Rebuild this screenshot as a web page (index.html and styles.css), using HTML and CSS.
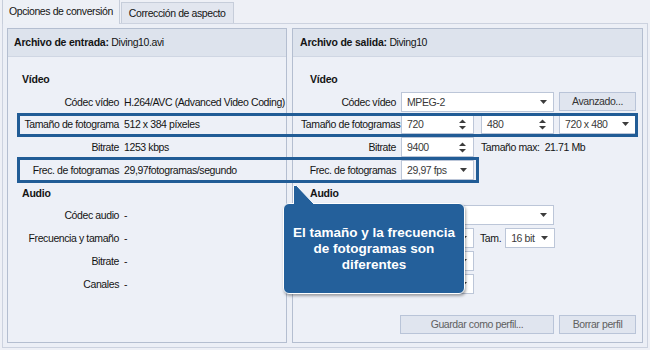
FILE: index.html
```html
<!DOCTYPE html>
<html lang="es">
<head>
    <meta charset="UTF-8">
    <title>Opciones de conversión</title>
    <link rel="stylesheet" href="styles.css">
</head>
<body>
<div class="window">
    <div class="tabs">
        <div class="tab active">Opciones de conversión</div>
        <div class="tab">Corrección de aspecto</div>
    </div>

    <div class="page">
        <!-- input file -->
        <section class="panel panel-in">
            <header class="panel-head"><b>Archivo de entrada:</b> Diving10.avi</header>
            <div class="panel-body">
                <div class="grid">
                    <div class="group">Vídeo</div>
                    <span class="lbl">Códec vídeo</span><span>H.264/AVC (Advanced Video Coding)</span>
                    <span class="lbl">Tamaño de fotograma</span><span>512 x 384 píxeles</span>
                    <span class="lbl">Bitrate</span><span>1253 kbps</span>
                    <span class="lbl">Frec. de fotogramas</span><span>29,97fotogramas/segundo</span>
                    <div class="group">Audio</div>
                    <span class="lbl">Códec audio</span><span>-</span>
                    <span class="lbl">Frecuencia y tamaño</span><span>-</span>
                    <span class="lbl">Bitrate</span><span>-</span>
                    <span class="lbl">Canales</span><span>-</span>
                </div>
            </div>
        </section>

        <!-- output file -->
        <section class="panel panel-out">
            <header class="panel-head"><b>Archivo de salida:</b> Diving10</header>
            <div class="panel-body">
                <div class="grid">
                    <div class="group">Vídeo</div>
                    <span class="lbl">Códec vídeo</span>
                    <div class="ctrls">
                        <div class="field combo w-wide">MPEG-2<svg class="arrow" width="7" height="4"><polygon points="0,0 7,0 3.5,4"/></svg></div>
                        <div class="btn w-side">Avanzado...</div>
                    </div>
                    <span class="lbl">Tamaño de fotogramas</span>
                    <div class="ctrls">
                        <div class="field spin w-num">720<svg class="spinner" width="7" height="11"><polygon points="0,4 3.5,0.5 7,4"/><polygon points="0,7 3.5,10.5 7,7"/></svg></div>
                        <div class="field spin w-num gap7">480<svg class="spinner" width="7" height="11"><polygon points="0,4 3.5,0.5 7,4"/><polygon points="0,7 3.5,10.5 7,7"/></svg></div>
                        <div class="field combo w-side">720 x 480<svg class="arrow" width="7" height="4"><polygon points="0,0 7,0 3.5,4"/></svg></div>
                    </div>
                    <span class="lbl">Bitrate</span>
                    <div class="ctrls">
                        <div class="field spin w-num">9400<svg class="spinner" width="7" height="11"><polygon points="0,4 3.5,0.5 7,4"/><polygon points="0,7 3.5,10.5 7,7"/></svg></div>
                        <span class="gap7">Tamaño max:&nbsp; 21.71 Mb</span>
                    </div>
                    <span class="lbl">Frec. de fotogramas</span>
                    <div class="ctrls">
                        <div class="field combo w-num">29,97 fps<svg class="arrow" width="7" height="4"><polygon points="0,0 7,0 3.5,4"/></svg></div>
                    </div>
                    <div class="group">Audio</div>
                    <span class="lbl"></span>
                    <div class="ctrls">
                        <div class="field combo w-wide"><svg class="arrow" width="7" height="4"><polygon points="0,0 7,0 3.5,4"/></svg></div>
                    </div>
                    <span class="lbl"></span>
                    <div class="ctrls">
                        <div class="field combo w-num"><svg class="arrow" width="7" height="4"><polygon points="0,0 7,0 3.5,4"/></svg></div>
                        <span class="tam">Tam.</span>
                        <div class="field combo w-bits">16 bit<svg class="arrow" width="7" height="4"><polygon points="0,0 7,0 3.5,4"/></svg></div>
                    </div>
                    <span class="lbl"></span>
                    <div class="ctrls">
                        <div class="field combo w-num"><svg class="arrow" width="7" height="4"><polygon points="0,0 7,0 3.5,4"/></svg></div>
                    </div>
                    <span class="lbl"></span>
                    <div class="ctrls">
                        <div class="field combo w-num"><svg class="arrow" width="7" height="4"><polygon points="0,0 7,0 3.5,4"/></svg></div>
                    </div>
                </div>
                <div class="actions">
                    <div class="btn disabled w-save">Guardar como perfil...</div>
                    <div class="btn disabled w-side">Borrar perfil</div>
                </div>
            </div>
        </section>
    </div>

    <!-- highlights over both panels -->
    <div class="mark mark-size"></div>
    <div class="mark mark-rate"></div>

    <div class="callout">
        <svg class="tail" width="22" height="20"><polygon points="0.5,20 0.5,0.5 3.5,0.5 22,20"/><polyline points="0.5,19 0.5,0.5 3.5,0.5 21,19"/></svg>
        <p>El tamaño y la frecuencia<br>de fotogramas son<br>diferentes</p>
    </div>
</div>
</body>
</html>
```

FILE: styles.css
```css
body {
    margin: 0;
    background-color: #eef0f6;
    font-family: "Liberation Sans", Arial, sans-serif;
    font-size: 10.5px;
    letter-spacing: -0.4px;
    color: #141414;
}
.window {
    position: relative;
    width: 650px;
    height: 350px;
    overflow: hidden;
}

/* tabs */
.tabs {
    display: flex;
    align-items: flex-end;
    height: 23px;
    padding-left: 2px;
    position: relative;
    z-index: 1;
}
.tab {
    height: 20px;
    line-height: 20px;
    padding: 0 7px;
    margin-left: 1px;
    border: 1px solid #c6cdda;
    border-bottom: none;
    background-color: #e2e6ef;
}
.tab.active {
    height: 24px;
    line-height: 23px;
    padding: 0 6px;
    margin: 0 0 -1px 0;
    background-color: #edf0f6;
}

/* tab page */
.page {
    box-sizing: border-box;
    width: 646px;
    height: 325px;
    margin-left: 2px;
    padding: 4px;
    border: 1px solid #ccd2df;
    background-color: #eceff6;
    display: flex;
    gap: 5px;
}
.panel {
    display: flex;
    flex-direction: column;
    border: 1px solid #b4bed0;
    background-color: #edf0f7;
}
.panel-in { width: 278px; }
.panel-out { width: 350px; }
.panel-head {
    height: 27px;
    line-height: 27px;
    padding-left: 6px;
    background-color: #dde3ed;
    border-bottom: 1px solid #cfd6e3;
}
.panel-out .panel-head {
    padding-left: 7px;
}
.panel-head b {
    letter-spacing: -0.2px;
}
.panel-body {
    flex: 1;
    display: flex;
    flex-direction: column;
    padding: 10.6px 6px 8px 8px;
}
.grid {
    display: grid;
    grid-template-columns: 103px auto;
    grid-auto-rows: 22.75px;
    column-gap: 5px;
    align-items: center;
    white-space: nowrap;
}
.panel-out .grid {
    grid-template-columns: 95px auto;
}
.group {
    grid-column: 1 / -1;
    font-weight: bold;
    padding-left: 6px;
    letter-spacing: -0.2px;
}
.panel-out .group {
    padding-left: 9px;
}
.lbl {
    text-align: right;
}

/* controls */
.ctrls {
    display: flex;
    align-items: center;
}
.field {
    box-sizing: border-box;
    position: relative;
    height: 20px;
    line-height: 18px;
    padding-left: 5px;
    border: 1px solid #bcc6d8;
    background-color: #fff;
    color: #3a3a3a;
}
.field svg {
    position: absolute;
    fill: #3c3c3c;
}
.arrow {
    right: 6px;
    top: 7px;
}
.spinner {
    right: 7px;
    top: 3.5px;
    fill: #4a4a4a;
}
.w-wide { width: 153px; }
.w-num { width: 73px; }
.w-side { width: 77px; }
.w-bits { width: 50px; }
.w-save { width: 154px; }
.gap7 { margin-left: 7px; }
.ctrls .w-side { margin-left: 5px; }
.tam {
    margin: 0 4px 0 6px;
}
.btn {
    box-sizing: border-box;
    height: 19px;
    line-height: 17px;
    text-align: center;
    border: 1px solid #b9c4d8;
    background-color: #e0e5ef;
    color: #333;
}
.btn.disabled {
    color: #5f5f5f;
}
.actions {
    margin-top: auto;
    display: flex;
    justify-content: flex-end;
    gap: 5px;
}

/* highlight frames */
.mark {
    position: absolute;
    box-sizing: border-box;
    border: 3px solid #215c96;
}
.mark-size {
    left: 17px;
    top: 113px;
    width: 621px;
    height: 24px;
}
.mark-rate {
    left: 17px;
    top: 157px;
    width: 462px;
    height: 26px;
}

/* callout bubble */
.callout {
    position: absolute;
    left: 283px;
    top: 203px;
    box-sizing: border-box;
    width: 182px;
    height: 91px;
    border: 1px solid #fff;
    border-radius: 6px;
    background-color: #24609b;
    box-shadow: 1px 2px 3px rgba(0, 0, 0, 0.35);
    display: flex;
    align-items: center;
    justify-content: center;
}
.tail {
    position: absolute;
    left: 9px;
    top: -19px;
}
.tail polygon {
    fill: #24609b;
}
.tail polyline {
    fill: none;
    stroke: #fff;
    stroke-width: 1;
}
.callout p {
    margin: 0;
    color: #fff;
    font-size: 13.5px;
    font-weight: bold;
    line-height: 16px;
    letter-spacing: 0;
    text-align: center;
}
```
